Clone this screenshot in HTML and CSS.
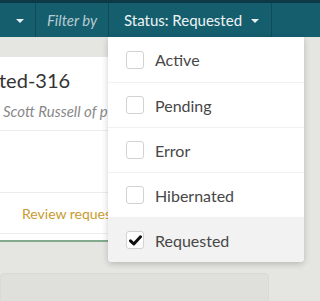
FILE: index.html
```html
<!DOCTYPE html>
<html lang="en">
<head>
    <meta charset="UTF-8">
    <meta name="viewport" content="width=device-width, initial-scale=1.0">
    <title>Requests - Filter</title>
    <link rel="stylesheet" href="styles.css">
</head>
<body>
    <div class="topbar">
        <div class="nav-item nav-caret">
            <span class="caret"></span>
        </div>
        <div class="nav-item nav-label">Filter by</div>
        <div class="nav-item nav-status">
            Status: Requested <span class="caret"></span>

            <ul class="dropdown">
                <li><span class="check"></span>Active</li>
                <li><span class="check"></span>Pending</li>
                <li><span class="check"></span>Error</li>
                <li><span class="check"></span>Hibernated</li>
                <li class="selected">
                    <span class="check">
                        <svg width="13" height="11" viewBox="0 0 13 11"><path d="M1.5 5.8 L4.8 9 L11.5 1.8" fill="none" stroke="#111" stroke-width="3" stroke-linecap="round" stroke-linejoin="round"/></svg>
                    </span>Requested
                </li>
            </ul>
        </div>
    </div>

    <div class="content">
        <div class="card">
            <div class="card-head">
                <h2>ted-316</h2>
                <p class="meta">Scott Russell of project</p>
            </div>
            <div class="card-body"></div>
            <div class="card-actions">
                <a class="action" href="#">Review request</a>
            </div>
        </div>

        <div class="card card-muted"></div>
    </div>
</body>
</html>
```

FILE: styles.css
```css
* {
    margin: 0;
    padding: 0;
    box-sizing: border-box;
}

body {
    font-family: Lato, "Open Sans", sans-serif;
    background: #e5e5e1;
    color: #444;
    overflow: hidden;
}

.topbar {
    display: flex;
    align-items: stretch;
    height: 37px;
    background: #155e6e;
    border-top: 3px solid #0d3a46;
    position: relative;
    z-index: 10;
}

.nav-item {
    display: flex;
    align-items: center;
    border-right: 1px solid #0f4d5b;
    font-size: 15px;
}

.nav-caret {
    width: 36px;
    justify-content: center;
    padding-left: 4px;
}

.nav-label {
    width: 73px;
    padding-left: 11px;
    font-style: italic;
    color: #b7cbd1;
}

.nav-status {
    position: relative;
    width: 163px;
    padding-left: 15px;
    color: #eef3f4;
}

.caret {
    display: inline-block;
    width: 0;
    height: 0;
    border-left: 4px solid transparent;
    border-right: 4px solid transparent;
    border-top: 4px solid #e9f0f2;
    margin-left: 9px;
    margin-top: 2px;
}

.nav-caret .caret {
    margin-left: 0;
}

.dropdown {
    position: absolute;
    top: 100%;
    left: -1px;
    width: 196px;
    list-style: none;
    background: white;
    border-radius: 0 0 4px 4px;
    box-shadow: 0 2px 6px rgba(0, 0, 0, 0.2);
    overflow: hidden;
}

.dropdown li {
    display: flex;
    align-items: center;
    height: 45px;
    padding-left: 18px;
    font-size: 16px;
    color: #474747;
    border-top: 1px solid #f1f1f1;
}

.dropdown li:first-child {
    border-top: none;
}

.dropdown li.selected {
    background: #f2f2f2;
}

.check {
    width: 18px;
    height: 18px;
    margin-right: 11px;
    border: 1px solid #d2d2d2;
    border-radius: 3px;
    background: white;
    display: flex;
    align-items: center;
    justify-content: center;
}

.content {
    padding-top: 20px;
}

.card {
    width: 270px;
    background: white;
    border-bottom: 2px solid #83aa8d;
    padding-bottom: 6px;
}

.card-head {
    padding: 10px 0;
    border-bottom: 1px solid #ececec;
}

.card-head h2 {
    font-size: 20px;
    font-weight: 400;
    color: #333;
    line-height: 26px;
    margin-left: -1px;
}

.meta {
    font-size: 15px;
    line-height: 18px;
    font-style: italic;
    color: #888;
    margin-top: 9px;
    margin-left: 3px;
    white-space: nowrap;
}

.card-body {
    height: 61px;
}

.card-actions {
    height: 42px;
    display: flex;
    align-items: center;
    padding-left: 22px;
    border-top: 1px solid #ececec;
    border-bottom: 1px solid #ececec;
}

.action {
    font-size: 14px;
    color: #c99b31;
    text-decoration: none;
    white-space: nowrap;
}

.card-muted {
    margin-top: 31px;
    height: 60px;
    width: 269px;
    background: #dfdfdb;
    border: 1px solid #d9d9d5;
    border-radius: 4px;
}
```
